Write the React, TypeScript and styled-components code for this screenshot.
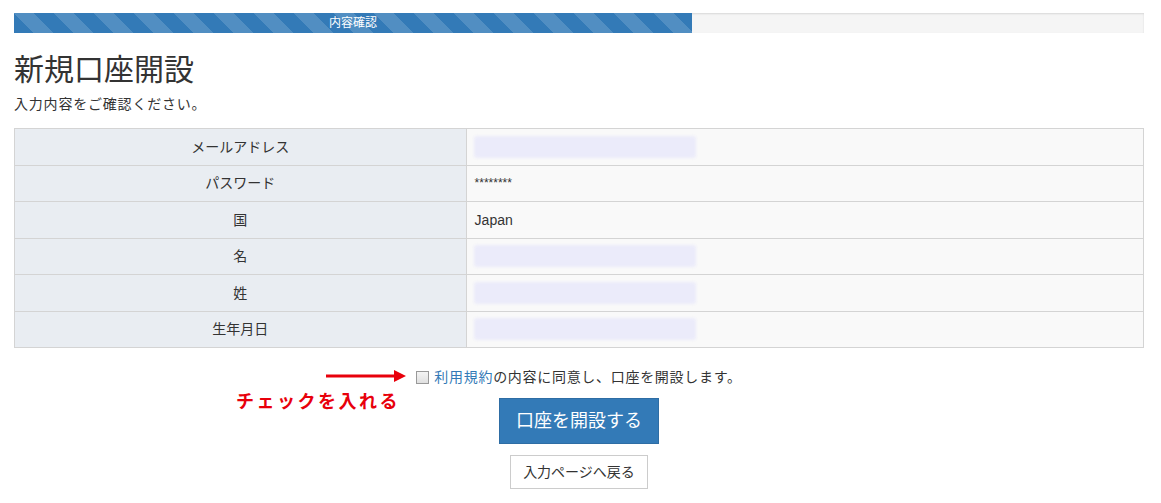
import * as React from 'react'
import styled, { createGlobalStyle } from 'styled-components'

const GlobalStyle = createGlobalStyle`
  html, body {
    margin: 0;
    padding: 0;
    background: #fff;
  }
  body {
    font-family: "Liberation Sans", "Noto Sans CJK JP", sans-serif;
    font-size: 14px;
    color: #333;
  }
`

const Page = styled.div`
  padding: 13px 17px 0 14px;
`

const Progress = styled.div`
  height: 20px;
  background: #f5f5f5;
  box-shadow: inset 0 1px 2px rgba(0, 0, 0, 0.12);
  overflow: hidden;
`

const ProgressBar = styled.div<{ $value: number }>`
  width: ${(p) => p.$value}%;
  height: 100%;
  background-color: #337ab7;
  background-image: linear-gradient(
    45deg,
    rgba(255, 255, 255, 0.15) 25%,
    transparent 25%,
    transparent 50%,
    rgba(255, 255, 255, 0.15) 50%,
    rgba(255, 255, 255, 0.15) 75%,
    transparent 75%,
    transparent
  );
  background-size: 40px 40px;
  color: #fff;
  font-size: 12px;
  line-height: 20px;
  text-align: center;
`

const Title = styled.h1`
  margin: 19px 0 0;
  font-size: 30px;
  font-weight: 400;
  line-height: 36px;
  color: #333;
`

const Lead = styled.p`
  margin: 6px 0 14px;
  line-height: 20px;
  letter-spacing: 0.8px;
`

const ConfirmTable = styled.table`
  width: 100%;
  border-collapse: collapse;
  border: 1px solid #d4d4d4;
`

const LabelCell = styled.th`
  width: 40%;
  height: 35.5px;
  padding: 0 8px;
  background: #e9edf2;
  border: 1px solid #d4d4d4;
  font-weight: 400;
  text-align: center;
  line-height: 20px;
`

const ValueCell = styled.td<{ $small?: boolean }>`
  height: 35.5px;
  padding: 0 8px;
  background: #f9f9f9;
  border: 1px solid #d4d4d4;
  font-size: ${(p) => (p.$small ? '12px' : '14px')};
  line-height: 20px;
`

const Redacted = styled.div`
  width: 222px;
  height: 22px;
  margin-left: -1px;
  background: #ebebfa;
  border-radius: 3px;
  filter: blur(1.5px);
`

const Actions = styled.div`
  position: relative;
  display: flex;
  flex-direction: column;
  align-items: center;
  padding-top: 19px;
`

const Agree = styled.label`
  display: flex;
  align-items: center;
  gap: 4px;
  line-height: 20px;
  letter-spacing: 0.7px;
  margin-bottom: 11px;
`

const Box = styled.span`
  width: 11px;
  height: 11px;
  border: 1px solid #999;
  background: linear-gradient(#f4f4f4, #e0e0e0);
  margin-right: 1px;
`

const TermsLink = styled.a`
  color: #337ab7;
  text-decoration: none;
`

const Button = styled.button<{ $primary?: boolean }>`
  font-family: inherit;
  cursor: pointer;
  border: 1px solid ${(p) => (p.$primary ? '#2e6da4' : '#ccc')};
  background: ${(p) => (p.$primary ? '#337ab7' : '#fff')};
  color: ${(p) => (p.$primary ? '#fff' : '#333')};
  font-size: ${(p) => (p.$primary ? '18px' : '14px')};
  line-height: ${(p) => (p.$primary ? '24px' : '20px')};
  padding: ${(p) => (p.$primary ? '10px 16px' : '6px 12px')};
  margin-bottom: 11px;
  border-radius: 0;
`

const Arrow = styled.svg`
  position: absolute;
  left: 312px;
  top: 22px;
`

const Note = styled.div`
  position: absolute;
  left: 222px;
  top: 40px;
  color: #e8000b;
  font-family: "Noto Sans CJK JP", sans-serif;
  font-weight: 700;
  font-size: 18px;
  letter-spacing: 2.5px;
  line-height: 24px;
`

const rows: { label: string; value?: string; small?: boolean }[] = [
  { label: 'メールアドレス' },
  { label: 'パスワード', value: '********', small: true },
  { label: '国', value: 'Japan' },
  { label: '名' },
  { label: '姓' },
  { label: '生年月日' },
]

export default function App() {
  return (
    <>
      <GlobalStyle />
      <Page>
        <Progress>
          <ProgressBar $value={60}>内容確認</ProgressBar>
        </Progress>
        <Title>新規口座開設</Title>
        <Lead>入力内容をご確認ください。</Lead>
        <ConfirmTable>
          <tbody>
            {rows.map((r, i) => (
              <tr key={i}>
                <LabelCell>{r.label}</LabelCell>
                <ValueCell $small={r.small}>
                  {r.value ? r.value : <Redacted />}
                </ValueCell>
              </tr>
            ))}
          </tbody>
        </ConfirmTable>
        <Actions>
          <Agree>
            <Box />
            <span>
              <TermsLink href="#">利用規約</TermsLink>
              の内容に同意し、口座を開設します。
            </span>
          </Agree>
          <Button $primary>口座を開設する</Button>
          <Button>入力ページへ戻る</Button>
          <Arrow width="82" height="12" viewBox="0 0 82 12">
            <line x1="0" y1="6" x2="70" y2="6" stroke="#e8000b" strokeWidth="3" />
            <polygon points="68,0 80,6 68,12" fill="#e8000b" />
          </Arrow>
          <Note>チェックを入れる</Note>
        </Actions>
      </Page>
    </>
  )
}
